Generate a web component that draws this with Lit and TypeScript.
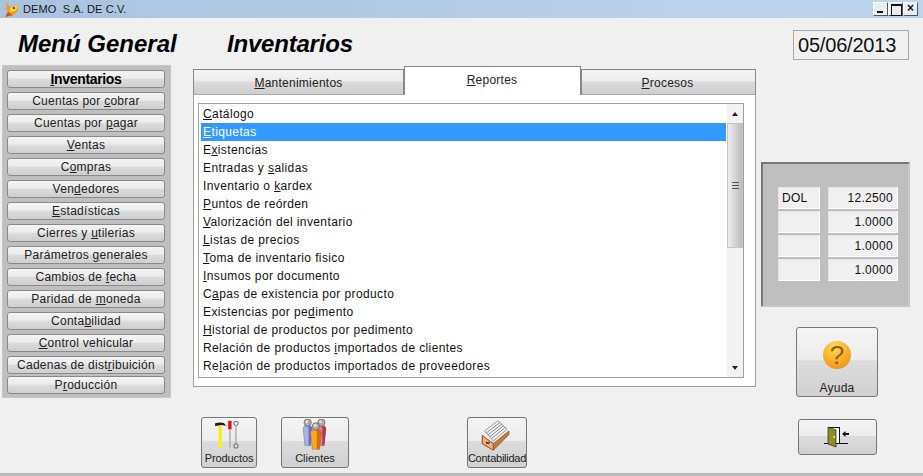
import { LitElement, html, css, svg } from "lit";
import { customElement } from "lit/decorators.js";

const label = (t: string, i: number) =>
  html`<span>${i < 0 ? t : html`${t.slice(0, i)}<u>${t[i]}</u>${t.slice(i + 1)}`}</span>`;

const MENU: [string, number][] = [
  ["Inventarios", 0], ["Cuentas por cobrar", 12], ["Cuentas por pagar", 12], ["Ventas", 0],
  ["Compras", 1], ["Vendedores", 3], ["Estadísticas", 0], ["Cierres y utilerias", 10],
  ["Parámetros generales", 11], ["Cambios de fecha", 11], ["Paridad de moneda", 11],
  ["Contabilidad", 5], ["Control vehicular", 0], ["Cadenas de distribuición", 15], ["Producción", 1],
];
const LIST: [string, number][] = [
  ["Catálogo", 0], ["Etiquetas", 0], ["Existencias", 1], ["Entradas y salidas", 11],
  ["Inventario o kardex", 13], ["Puntos de reórden", 0], ["Valorización del inventario", 0],
  ["Listas de precios", 0], ["Toma de inventario fisico", 0], ["Insumos por documento", 0],
  ["Capas de existencia por producto", 1], ["Existencias por pedimento", 18],
  ["Historial de productos por pedimento", 0], ["Relación de productos importados de clientes", 22],
  ["Relación de productos importados de proveedores", 2],
];
const RATES = [["DOL", "12.2500"], ["", "1.0000"], ["", "1.0000"], ["", "1.0000"]];

const foxIcon = svg`<svg width="18" height="18" viewBox="0 0 18 18">
  <path d="M1 6 L5 9 L4 2 L8 7 L14 5 L17 7 L15 12 L10 16 L3 17 L6 12 Z" fill="#f09a28"/>
  <path d="M8 8 L14 5.500 L16 7.500 L13 11 L8 12 Z" fill="#f8d648"/>
  <path d="M3 17 L6 12 L10 15 Z" fill="#c2561a"/><circle cx="12" cy="8" r="1" fill="#402008"/>
</svg>`;
const toolsIcon = svg`<svg width="36" height="38" viewBox="0 0 36 38">
  <path d="M2 5 L7 4 L12 4.500 L15 8 L10 7 L2 8 Z" fill="#1c1c1c"/>
  <rect x="6" y="8" width="4" height="25" fill="#f6ee20"/>
  <rect x="17" y="2" width="4" height="10" fill="#e01818"/><rect x="18.200" y="12" width="1.800" height="21" fill="#b4b4b4"/>
  <circle cx="26" cy="5" r="2.400" fill="none" stroke="#777" stroke-width="1.200"/>
  <rect x="25" y="7.500" width="2" height="21" fill="#d0d0d0" stroke="#999" stroke-width=".4"/>
  <circle cx="26" cy="31" r="2.400" fill="none" stroke="#777" stroke-width="1.200"/>
</svg>`;
const person = (x: number, y: number, w: number, body: string, dark: string, h: number) => svg`
  <path d="M${x - w} ${y + 7} Q${x - w} ${y + 4} ${x - w + 2} ${y + 4} H${x + w - 2} Q${x + w} ${y + 4} ${x + w} ${y + 7} L${x + w - 2} ${y + h} H${x - w + 2} Z" fill=${body} stroke="#555" stroke-width=".4"/>
  <path d="M${x + 1} ${y + 4} H${x + w - 1} L${x + w} ${y + 7} L${x + w - 2} ${y + h} H${x + 1} Z" fill=${dark}/>
  <circle cx=${x} cy=${y} r="4" fill="#b0aca4" stroke="#444" stroke-width=".6"/>
  <circle cx=${x - 1} cy=${y - 1} r="1.500" fill="#e8e6e0"/>`;
const peopleIcon = svg`<svg width="32" height="36" viewBox="0 0 32 36">
  ${person(8, 4, 5, "#aab0ee", "#6a70c0", 25)}${person(23, 4, 5, "#ee7a98", "#a83a55", 25)}${person(17, 8, 6, "#fca424", "#d07008", 25)}
</svg>`;
const boxIcon = svg`<svg width="34" height="36" viewBox="0 0 34 36">
  <path d="M3.500 13 L18 2 L28 11 L13 24 Z" fill="#f6f6f6" stroke="#666" stroke-width=".7"/>
  <path d="M5.500 15 L20 4 M7.500 17 L22 5.800 M9.500 19 L24 7.500 M11.500 21 L26 9.300" stroke="#6a6a6a" stroke-width=".9"/>
  <path d="M1 18 L13 27 L30 13 V17 L13 34 L1 27 Z" fill="#cc7a3c" stroke="#6e3814" stroke-width=".7"/>
  <path d="M1 18 L13 27 V34 L1 27 Z" fill="#eeb078" stroke="#6e3814" stroke-width=".7"/>
  <rect x="5" y="25" width="4" height="2" fill="#5a3010"/>
</svg>`;
const helpIcon = svg`<svg width="30" height="30" viewBox="0 0 30 30">
  <defs><radialGradient id="h" cx=".42" cy=".22" r=".9"><stop offset="0" stop-color="#ffdc50"/><stop offset="1" stop-color="#ee8a10"/></radialGradient></defs>
  <circle cx="15" cy="15" r="14" fill="url(#h)"/>
  <text x="15" y="24" text-anchor="middle" class="q">?</text>
</svg>`;
const doorIcon = svg`<svg width="28" height="22" viewBox="0 0 28 22">
  <path d="M0 17.500 H24" stroke="#111" stroke-width="1"/>
  <rect x="4.500" y="1.500" width="11" height="16" fill="#fff" stroke="#111"/>
  <path d="M4 1 L12 4 V21 L4 18 Z" fill="#8d9020" stroke="#222" stroke-width=".7"/>
  <rect x="9.500" y="10" width="1.400" height="1.800" fill="#fff"/>
  <path d="M18 8 L21.500 5 V7 H25 V9 H21.500 V11 Z" fill="#111"/>
</svg>`;

@customElement("app-root")
export class AppRoot extends LitElement {
  static styles = css`
    :host { display: block; width: 923px; height: 476px; overflow: hidden; background: #f0f0f0; position: relative;
      font-family: "Liberation Sans", Arial, sans-serif; color: #111; box-sizing: border-box; }
    * { box-sizing: border-box; }
    .titlebar { height: 18px; background: linear-gradient(90deg, #a9c3de, #b9d1ea 70%, #bcd4ec);
      display: flex; align-items: center; padding: 0 5px 0 2px; font-size: 11px; letter-spacing: .1px; color: #1a1a1a; white-space: pre; }
    .titlebar svg { margin-right: 3px; }
    .caps { margin-left: auto; display: flex; }
    .cap { width: 15px; height: 14px; background: #e8eef4; border: 1px solid #fff; border-right-color: #555;
      border-bottom-color: #555; position: relative; }
    .cap::after { content: ""; position: absolute; }
    .min::after { left: 3px; bottom: 2px; width: 6px; height: 2px; background: #111; }
    .max::after { left: 2px; top: 1px; width: 9px; height: 9px; border: 1px solid #111; border-top-width: 2px; }
    .close { font: bold 12px/11px "Liberation Sans", sans-serif; text-align: center; color: #111; }

    .head { height: 47px; display: flex; align-items: center; padding: 5px 14px 0 18px; }
    .title { font: italic bold 24px "Liberation Sans", sans-serif; color: #000; white-space: nowrap; }
    .t1 { width: 209px; }
    .t2 { letter-spacing: -.2px; }
    .date { margin-left: auto; width: 116px; height: 30px; border: 1px solid #a8a8a8; background: #f0f0f0; letter-spacing: -.2px;
      font-size: 20px; display: flex; align-items: center; padding-left: 4px; margin-top: 2px; color: #111; }

    .body { display: flex; padding-left: 2px; align-items: flex-start; }
    .side { width: 169px; height: 333px; background: #bfbfbf; border: 1px solid #c8c8c8; padding: 4px 5px 0 4px;
      display: flex; flex-direction: column; gap: 4px; flex: none; }
    .mbtn { height: 18px; flex: none; border: 1px solid #8a8a8a; border-radius: 3px; font-size: 12px; letter-spacing: .27px;
      background: linear-gradient(#f4f4f4 0%, #ececec 45%, #dcdcdc 50%, #cecece 100%);
      display: flex; align-items: center; justify-content: center; white-space: nowrap; color: #222; }
    .mbtn:last-child { margin-top: -2px; }
    .mbtn.active { font-weight: bold; font-size: 14px; color: #000; letter-spacing: -.35px; }

    .center { margin-left: 22px; width: 563px; flex: none; margin-top: 2px; }
    .tabs { display: flex; height: 28px; align-items: flex-end; }
    .tab { height: 26px; width: 211px; border: 1px solid #888; border-bottom-color: #aaa; font-size: 12px; letter-spacing: .25px;
      background: linear-gradient(#f4f4f4 0%, #ececec 45%, #dcdcdc 50%, #cecece 100%);
      display: flex; align-items: center; justify-content: center; padding-top: 2px; color: #222; }
    .tab.on { width: 177px; height: 29px; background: #fff; border-bottom: none; padding: 0 1px 3px 0; }
    .tab.last { flex: 1; padding-right: 2px; }
    .panel { background: #fff; border: 1px solid #a0a0a0; border-top: none; height: 292px; padding: 8px 11px 8px 4px; }
    .list { height: 275px; border: 1px solid #a0a0a0; display: flex; overflow: hidden; padding: 0 0 0 2px; }
    .items { flex: 1; min-width: 0; padding-top: 1px; }
    .item { height: 18px; font-size: 12px; letter-spacing: .39px; line-height: 18px; padding-left: 2px; white-space: nowrap; color: #111; }
    .item.sel { background: #3399ff; color: #fff; }
    .sb { width: 16px; margin-left: 1px; align-self: stretch; background: #f2f2f2; display: flex; flex-direction: column; align-items: center; flex: none; }
    .arrow { height: 19px; display: flex; align-items: center; justify-content: center; flex: none; width: 100%; }
    .arrow i { width: 0; height: 0; border: 3px solid transparent; }
    .up i { border-bottom: 4px solid #222; border-top: none; }
    .down i { border-top: 4px solid #222; border-bottom: none; }
    .thumb { width: 100%; height: 125px; flex: none; background: linear-gradient(90deg, #ededed, #d2d2d2 55%, #bcbcbc);
      border: 1px solid #c4c4c4; display: flex; align-items: center; justify-content: center; }
    .thumb b { width: 7px; height: 7px; border-top: 1px solid #555; border-bottom: 1px solid #555; position: relative; }
    .thumb b::after { content: ""; position: absolute; left: 0; right: 0; top: 2px; height: 1px; background: #555; }
    .sb .sp { flex: 1; }

    .tools { display: flex; margin-top: 30px; align-items: flex-start; }
    .big { height: 51px; border: 1px solid #777; border-radius: 3px; flex: none; display: flex; flex-direction: column; align-items: center;
      background: linear-gradient(#f4f4f4 0%, #ececec 47%, #dcdcdc 48%, #d0d0d0 100%); font-size: 11px; color: #222; white-space: nowrap; padding-top: 1px; }
    .big span { margin-top: auto; margin-bottom: 3px; }
    .b1 { width: 56px; margin-left: 8px; }
    .b1 span { letter-spacing: -.1px; }
    .b2 { width: 68px; margin-left: 24px; }
    .b3 { width: 60px; margin-left: 118px; }
    .b3 span { letter-spacing: -.25px; }

    .right { margin-left: 5px; width: 149px; flex: none; margin-top: 97px; display: flex; flex-direction: column; }
    .rates { height: 145px; background: #bfbfbf; border: 2px solid #c8c8c8; border-top-color: #777; border-left-color: #777;
      padding: 23px 0 0 15px; display: grid; grid-template-columns: 42px 70px; column-gap: 8px; grid-auto-rows: 22px; row-gap: 2px; }
    .cell { background: #f0f0f0; border: 1px solid #e4e4e4; border-right-color: #fff; border-bottom-color: #fff; font-size: 12px;
      display: flex; align-items: center; padding: 0 3px; letter-spacing: .3px; color: #111; }
    .cell.num { justify-content: flex-end; padding-right: 4px; }
    .help { width: 82px; height: 70px; margin: 20px 0 0 35px; font-size: 12px; padding-top: 12px; }
    .help span { margin-bottom: 1px; letter-spacing: .2px; }
    .exit { width: 79px; height: 36px; margin: 22px 0 0 37px; justify-content: center; padding: 0; }
    .q { font: 26px "Liberation Sans", sans-serif; fill: #9c5a14; }
    .foot { position: absolute; left: 0; top: 473px; width: 923px; height: 3px; background: #bbb; }
  `;

  render() {
    return html`
      <div class="titlebar">${foxIcon}<span>DEMO  S.A. DE C.V.</span>
        <div class="caps"><div class="cap min"></div><div class="cap max"></div><div class="cap close">×</div></div>
      </div>
      <div class="head">
        <div class="title t1">Menú General</div>
        <div class="title t2">Inventarios</div>
        <div class="date">05/06/2013</div>
      </div>
      <div class="body">
        <div class="side">
          ${MENU.map(([t, i], n) => html`<div class="mbtn ${n === 0 ? "active" : ""}">${label(t, i)}</div>`)}
        </div>
        <div class="center">
          <div class="tabs">
            <div class="tab">${label("Mantenimientos", 0)}</div>
            <div class="tab on">${label("Reportes", 0)}</div>
            <div class="tab last">${label("Procesos", 0)}</div>
          </div>
          <div class="panel">
            <div class="list">
              <div class="items">
                ${LIST.map(([t, i], n) => html`<div class="item ${n === 1 ? "sel" : ""}">${label(t, i)}</div>`)}
              </div>
              <div class="sb">
                <div class="arrow up"><i></i></div>
                <div class="thumb"><b></b></div>
                <div class="sp"></div>
                <div class="arrow down"><i></i></div>
              </div>
            </div>
          </div>
          <div class="tools">
            <div class="big b1">${toolsIcon}<span>Productos</span></div>
            <div class="big b2">${peopleIcon}<span>Clientes</span></div>
            <div class="big b3">${boxIcon}<span>Contabilidad</span></div>
          </div>
        </div>
        <div class="right">
          <div class="rates">
            ${RATES.map(([a, b]) => html`<div class="cell">${a}</div><div class="cell num">${b}</div>`)}
          </div>
          <div class="big help">${helpIcon}<span>Ayuda</span></div>
          <div class="big exit">${doorIcon}</div>
        </div>
      </div>
      <div class="foot"></div>
    `;
  }
}
